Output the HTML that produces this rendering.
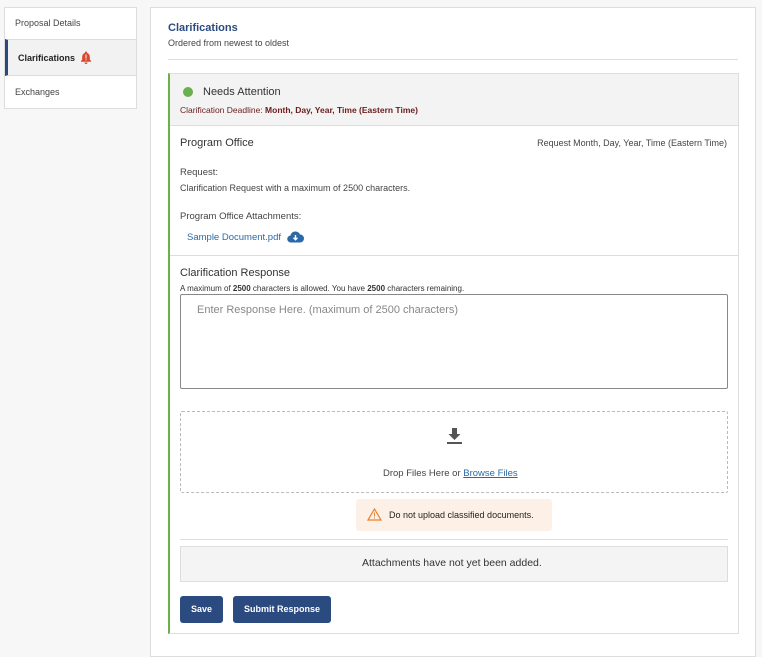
<!DOCTYPE html>
<html><head><style>
*{box-sizing:border-box;margin:0;padding:0}
body{width:762px;height:644px;background:#f7f7f7;font-family:"Liberation Sans",sans-serif;color:#333;position:relative;overflow:hidden}
.a{position:absolute}
.t{position:absolute;white-space:nowrap;line-height:1}
</style></head><body>
<div class="a" style="left:4px;top:7px;width:133px;height:102px;background:#fff;border:1px solid #ddd"></div>
<div class="a" style="left:5px;top:39px;width:131px;height:37px;background:#f2f2f2;border-top:1px solid #ddd;border-bottom:1px solid #ddd;border-left:3px solid #2a4a80"></div>
<div class="t" style="left:15px;top:19px;font-size:9px;color:#444">Proposal Details</div>
<div class="t" style="left:18px;top:54px;font-size:9px;font-weight:bold;color:#222">Clarifications</div>
<svg class="a" style="left:80px;top:51px" width="12" height="13" viewBox="0 0 12 13"><path d="M6 0.5c.6 0 1 .4 1 1v.5c1.8.5 2.8 2 2.8 4v2.5l1.2 1.5v.8H1v-.8l1.2-1.5V6c0-2 1-3.5 2.8-4v-.5c0-.6.4-1 1-1z" fill="#d9482b"/><path d="M4.5 11.5h3a1.5 1.5 0 0 1-3 0z" fill="#d9482b"/><rect x="5.5" y="3.5" width="1" height="4" fill="#fff"/><rect x="5.5" y="8.3" width="1" height="1" fill="#fff"/></svg>
<div class="t" style="left:15px;top:88px;font-size:9px;color:#444">Exchanges</div>

<div class="a" style="left:150px;top:7px;width:606px;height:650px;background:#fff;border:1px solid #ddd"></div>
<div class="t" style="left:168px;top:23px;font-size:11px;font-weight:bold;color:#2a4a80">Clarifications</div>
<div class="t" style="left:168px;top:39px;font-size:9px;color:#444">Ordered from newest to oldest</div>
<div class="a" style="left:168px;top:59px;width:570px;height:1px;background:#ddd"></div>

<div class="a" style="left:168px;top:73px;width:571px;height:561px;border:1px solid #ddd;border-left:2px solid #6ab04c;background:#fff"></div>
<div class="a" style="left:170px;top:74px;width:568px;height:52px;background:#f3f3f3;border-bottom:1px solid #ddd"></div>
<div class="a" style="left:183px;top:87px;width:10px;height:10px;border-radius:50%;background:#6ab04c"></div>
<div class="t" style="left:203px;top:87px;font-size:11px;color:#333">Needs Attention</div>
<div class="t" style="left:180px;top:106px;font-size:8.5px;color:#6b1c1c">Clarification Deadline: <b>Month, Day, Year, Time (Eastern Time)</b></div>

<div class="t" style="left:180px;top:138px;font-size:11px;color:#333">Program Office</div>
<div class="t" style="right:35px;top:139px;font-size:9px;color:#444">Request Month, Day, Year, Time (Eastern Time)</div>
<div class="t" style="left:180px;top:168px;font-size:9.5px;color:#444">Request:</div>
<div class="t" style="left:180px;top:184px;font-size:9px;color:#444">Clarification Request with a maximum of 2500 characters.</div>
<div class="t" style="left:180px;top:212px;font-size:9.5px;color:#444">Program Office Attachments:</div>
<div class="t" style="left:187px;top:233px;font-size:9.5px;color:#2a6aa8">Sample Document.pdf</div>
<svg class="a" style="left:287px;top:231px" width="17" height="12" viewBox="0 0 17 12"><path d="M4 11.5a3.5 3.5 0 0 1-.5-7A5 5 0 0 1 13 3.5a4 4 0 0 1 0 8z" fill="#2a6aa8"/><path d="M8.5 4v4.5M6.5 6.8l2 2 2-2" stroke="#fff" stroke-width="1.4" fill="none"/></svg>
<div class="a" style="left:170px;top:255px;width:568px;height:1px;background:#ddd"></div>

<div class="t" style="left:180px;top:268px;font-size:11px;color:#333">Clarification Response</div>
<div class="t" style="left:180px;top:285px;font-size:8px;color:#333">A maximum of <b>2500</b> characters is allowed. You have <b>2500</b> characters remaining.</div>
<div class="a" style="left:180px;top:294px;width:548px;height:95px;border:1px solid #888;border-radius:2px"></div>
<div class="t" style="left:197px;top:305px;font-size:11px;color:#888">Enter Response Here. (maximum of 2500 characters)</div>

<div class="a" style="left:180px;top:411px;width:548px;height:82px;border:1px dashed #bbb;border-radius:2px"></div>
<svg class="a" style="left:446px;top:427px" width="17" height="18" viewBox="0 0 17 18"><path d="M6 1h5v6h3.5L8.5 13 2.5 7H6z" fill="#555"/><rect x="1" y="15" width="15" height="2" fill="#555"/></svg>
<div class="t" style="left:383px;top:469px;font-size:9.5px;color:#444">Drop Files Here or <span style="color:#2a6aa8;text-decoration:underline">Browse Files</span></div>

<div class="a" style="left:356px;top:499px;width:196px;height:32px;background:#fdf0e6;border-radius:3px"></div>
<svg class="a" style="left:367px;top:508px" width="15" height="13" viewBox="0 0 15 13"><path d="M7.5 1L14 12H1z" fill="none" stroke="#e87f2e" stroke-width="1.2"/><rect x="7" y="4.5" width="1" height="4" fill="#e87f2e"/><rect x="7" y="9.5" width="1" height="1" fill="#e87f2e"/></svg>
<div class="t" style="left:389px;top:511px;font-size:9px;color:#222">Do not upload classified documents.</div>

<div class="a" style="left:180px;top:539px;width:548px;height:1px;background:#ddd"></div>
<div class="a" style="left:180px;top:546px;width:548px;height:36px;background:#f4f4f4;border:1px solid #ddd"></div>
<div class="t" style="left:362px;top:558px;font-size:10.5px;color:#333">Attachments have not yet been added.</div>

<div class="a" style="left:180px;top:596px;width:43px;height:27px;background:#2a4a80;border-radius:3px;color:#fff;font-size:9px;font-weight:bold;text-align:center;line-height:27px">Save</div>
<div class="a" style="left:233px;top:596px;width:98px;height:27px;background:#2a4a80;border-radius:3px;color:#fff;font-size:9px;font-weight:bold;text-align:center;line-height:27px">Submit Response</div>
</body></html>
